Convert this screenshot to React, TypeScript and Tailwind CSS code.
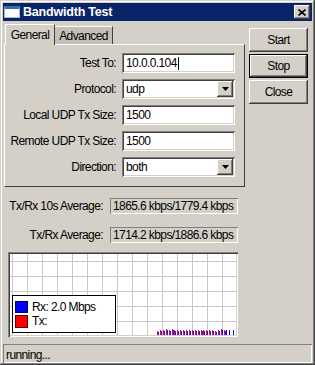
import React from 'react'

const FONT = { fontFamily: '"Liberation Sans", Arial, sans-serif' }

const RAISED =
  'shadow-[inset_-1px_-1px_#404040,inset_1px_1px_#ffffff,inset_-2px_-2px_#808080,inset_2px_2px_#d4d0c8]'
const SUNKEN =
  'shadow-[inset_1px_1px_#808080,inset_-1px_-1px_#ffffff,inset_2px_2px_#404040,inset_-2px_-2px_#d4d0c8]'
const THIN_SUNKEN = 'shadow-[inset_1px_1px_#808080,inset_-1px_-1px_#ffffff]'

function Field({ label, value, caret, select }: { label: string; value: string; caret?: boolean; select?: boolean }) {
  return (
    <div className="flex items-center h-[20px]">
      <div className="w-[111px] text-right text-black">{label}</div>
      <div className={`ml-[6px] w-[113px] h-[20px] bg-white flex items-center pl-[4px] relative ${SUNKEN}`}>
        <span>{value}</span>
        {caret && <span className="w-px h-[13px] bg-black ml-px" />}
        {select && (
          <div className={`absolute right-[2px] top-[2px] w-[16px] h-[16px] bg-[#d4d0c8] flex items-center justify-center ${RAISED}`}>
            <svg width="7" height="4" viewBox="0 0 7 4">
              <path d="M0 0h7L3.5 4z" fill="#000" />
            </svg>
          </div>
        )}
      </div>
    </div>
  )
}

function Button({ label, primary }: { label: string; primary?: boolean }) {
  return (
    <div
      className={`h-[24px] w-[59px] flex items-center justify-center bg-[#d4d0c8] ${
        primary
          ? 'border border-black shadow-[inset_-1px_-1px_#404040,inset_1px_1px_#ffffff,inset_-2px_-2px_#808080]'
          : RAISED
      }`}
    >
      {label}
    </div>
  )
}

function Stat({ label, value }: { label: string; value: string }) {
  return (
    <div className="flex items-center h-[16px]">
      <div className="w-[100px] text-right">{label}</div>
      <div className={`ml-[7px] w-[128px] h-[16px] flex items-center pl-[3px] ${THIN_SUNKEN}`}>{value}</div>
    </div>
  )
}

const bars = Array.from({ length: 24 }, (_, i) => {
  const hs = [4, 5, 5, 6, 5, 6, 5, 5, 5, 5, 5, 5, 5, 5, 5, 5, 5, 5, 5, 5, 4, 5, 6, 5]
  return { x: 147 + i * 2.9, h: hs[i] }
})
const tail = [212, 215.5, 219, 222.5, 226]

function Graph() {
  return (
    <div className="ml-[5px] mt-[9px] w-[230px] h-[85px] bg-white p-[2px] shadow-[inset_1px_1px_#808080,inset_2px_2px_#404040,inset_-1px_-1px_#ffffff,inset_-2px_-2px_#d4d0c8] relative">
      <svg width="226" height="81" viewBox="0 0 226 81" className="block">
        {Array.from({ length: 16 }, (_, k) => (
          <line key={'v' + k} x1={2.5 + 15 * k} y1={0} x2={2.5 + 15 * k} y2={81} stroke="#c8c8c8" strokeWidth={1} />
        ))}
        {Array.from({ length: 5 }, (_, k) => (
          <line key={'h' + k} x1={0} y1={7.5 + 15 * k} x2={226} y2={7.5 + 15 * k} stroke="#c8c8c8" strokeWidth={1} />
        ))}
        {bars.map((b, i) => (
          <g key={i}>
            <rect x={Math.round(b.x)} y={81 - b.h} width={1} height={b.h} fill="#d0106a" />
            <rect x={Math.round(b.x) + 1} y={81 - b.h + 1} width={1} height={b.h - 1} fill="#3010c0" />
          </g>
        ))}
        {tail.map((x, i) => (
          <rect key={'t' + i} x={Math.round(x)} y={76} width={1} height={5} fill="#0000ff" />
        ))}
      </svg>
      <div className="absolute left-[4px] top-[43px] w-[104px] h-[38px] bg-white border border-black px-[2px] pt-[4px] flex flex-col gap-[1px]">
        <div className="flex items-center h-[13px]">
          <div className="w-[13px] h-[12px] bg-[#0000ff] border border-[#000060]" />
          <span className="ml-[4px]">Rx: 2.0 Mbps</span>
        </div>
        <div className="flex items-center h-[14px]">
          <div className="w-[13px] h-[13px] bg-[#ff0000] border border-[#600000]" />
          <span className="ml-[4px]">Tx:</span>
        </div>
      </div>
    </div>
  )
}

export default function App() {
  return (
    <div
      style={FONT}
      className="w-[315px] h-[365px] bg-[#d4d0c8] p-[3px] flex flex-col text-[12px] tracking-[-0.6px] text-black shadow-[inset_-1px_-1px_#404040,inset_1px_1px_#d4d0c8,inset_-2px_-2px_#808080,inset_2px_2px_#ffffff] overflow-hidden"
    >
      <div className="h-[18px] bg-[#0a246a] flex items-center pl-[1px] pr-[2px]">
        <div className="w-[16px] h-[12px] bg-white border border-[#a0b8e0] border-t-[3px] border-t-[#3a6ea5]" />
        <span className="ml-[3px] text-white font-bold text-[12.5px] tracking-[-0.2px]">Bandwidth Test</span>
        <div className={`ml-auto w-[16px] h-[14px] bg-[#d4d0c8] flex items-center justify-center ${RAISED}`}>
          <svg width="8" height="7" viewBox="0 0 8 7">
            <path d="M0.5 0.5L7.5 6.5M7.5 0.5L0.5 6.5" stroke="#000" strokeWidth="1.6" />
          </svg>
        </div>
      </div>

      <div className="flex mt-[2px]">
        <div className="ml-[1px] w-[241px] flex flex-col">
          <div className="h-[21px] flex items-end pl-[1px]">
            <div className="h-[21px] w-[50px] bg-[#d4d0c8] flex items-center justify-center border-t border-l border-white border-r border-r-[#404040] relative z-10 -mb-px pb-px">
              General
            </div>
            <div className="h-[18px] w-[58px] bg-[#c4c0b8] flex items-center justify-center border-t border-r border-t-white border-r-[#404040]">
              Advanced
            </div>
          </div>
          <div className="h-[143px] border-t border-l border-white border-r border-b border-r-[#404040] border-b-[#404040] pt-[8px] flex flex-col gap-[6px]">
            <Field label="Test To:" value="10.0.0.104" caret />
            <Field label="Protocol:" value="udp" select />
            <Field label="Local UDP Tx Size:" value="1500" />
            <Field label="Remote UDP Tx Size:" value="1500" />
            <Field label="Direction:" value="both" select />
          </div>
        </div>
        <div className="ml-[4px] mt-[5px] flex flex-col gap-[2px]">
          <Button label="Start" />
          <Button label="Stop" primary />
          <Button label="Close" />
        </div>
      </div>

      <div className="mt-[11px] flex flex-col gap-[13px]">
        <Stat label="Tx/Rx 10s Average:" value="1865.6 kbps/1779.4 kbps" />
        <Stat label="Tx/Rx Average:" value="1714.2 kbps/1886.6 kbps" />
      </div>

      <Graph />

      <div className={`mt-[7px] h-[19px] flex items-center pl-[3px] pt-[2px] ${THIN_SUNKEN}`}>running...</div>
    </div>
  )
}
